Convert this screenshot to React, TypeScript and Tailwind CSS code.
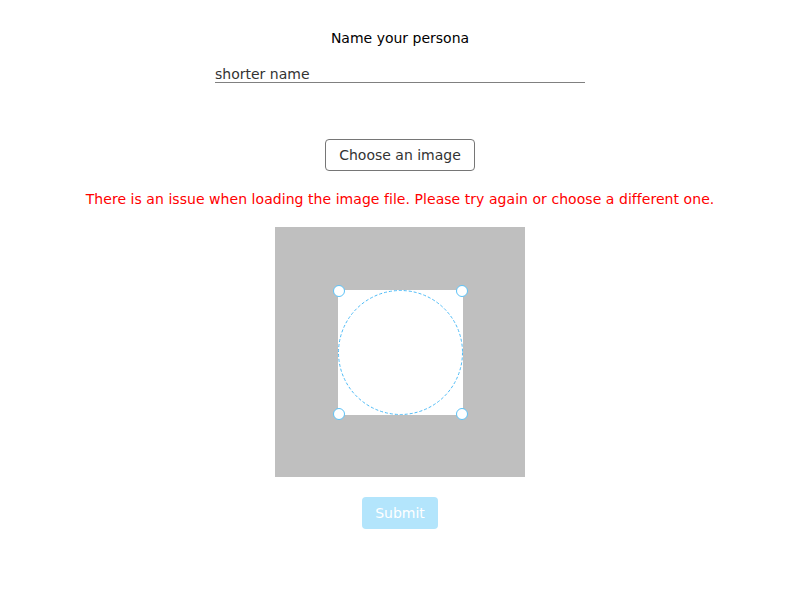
import React from "react";

export default function App() {
  const font = { fontFamily: '"DejaVu Sans", sans-serif' };
  const corners: [number, number][] = [
    [64, 64],
    [187, 64],
    [64, 187],
    [187, 187],
  ];
  return (
    <div className="w-[800px] h-[600px] bg-white flex flex-col items-center" style={font}>
      <div className="mt-[30px] text-[14px] leading-[17px] text-black">Name your persona</div>
      <div className="mt-[19px] w-[370px] border-b border-[#808080]">
        <input
          className="block w-full text-[14px] leading-[16px] h-[16px] text-[#333] outline-none bg-transparent p-0"
          style={font}
          defaultValue="shorter name"
        />
      </div>
      <button
        className="mt-[56px] w-[150px] h-[32px] border border-[#767676] rounded-[4px] text-[14px] text-[#333] bg-white"
        style={font}
      >
        Choose an image
      </button>
      <div className="mt-[20px] text-[14px] leading-[17px] text-[#ff0000] tracking-[0.05px]">
        There is an issue when loading the image file. Please try again or choose a different one.
      </div>
      <div className="mt-[19px] w-[250px] h-[250px] bg-[#bfbfbf]">
        <svg width="250" height="250" viewBox="0 0 250 250" className="overflow-visible">
          <rect x="63" y="63" width="125" height="125" fill="#ffffff" />
          <circle
            cx="125.5"
            cy="125.5"
            r="62"
            fill="none"
            stroke="#4dbbf7"
            strokeWidth="1"
            strokeDasharray="3 2"
          />
          {corners.map(([x, y], i) => (
            <circle key={i} cx={x} cy={y} r="5.5" fill="#ffffff" stroke="#5cc2f7" strokeWidth="1" />
          ))}
        </svg>
      </div>
      <button
        className="mt-[20px] w-[76px] h-[32px] rounded-[4px] bg-[#b3e5fc] text-white text-[14px]"
        style={font}
      >
        Submit
      </button>
    </div>
  );
}
